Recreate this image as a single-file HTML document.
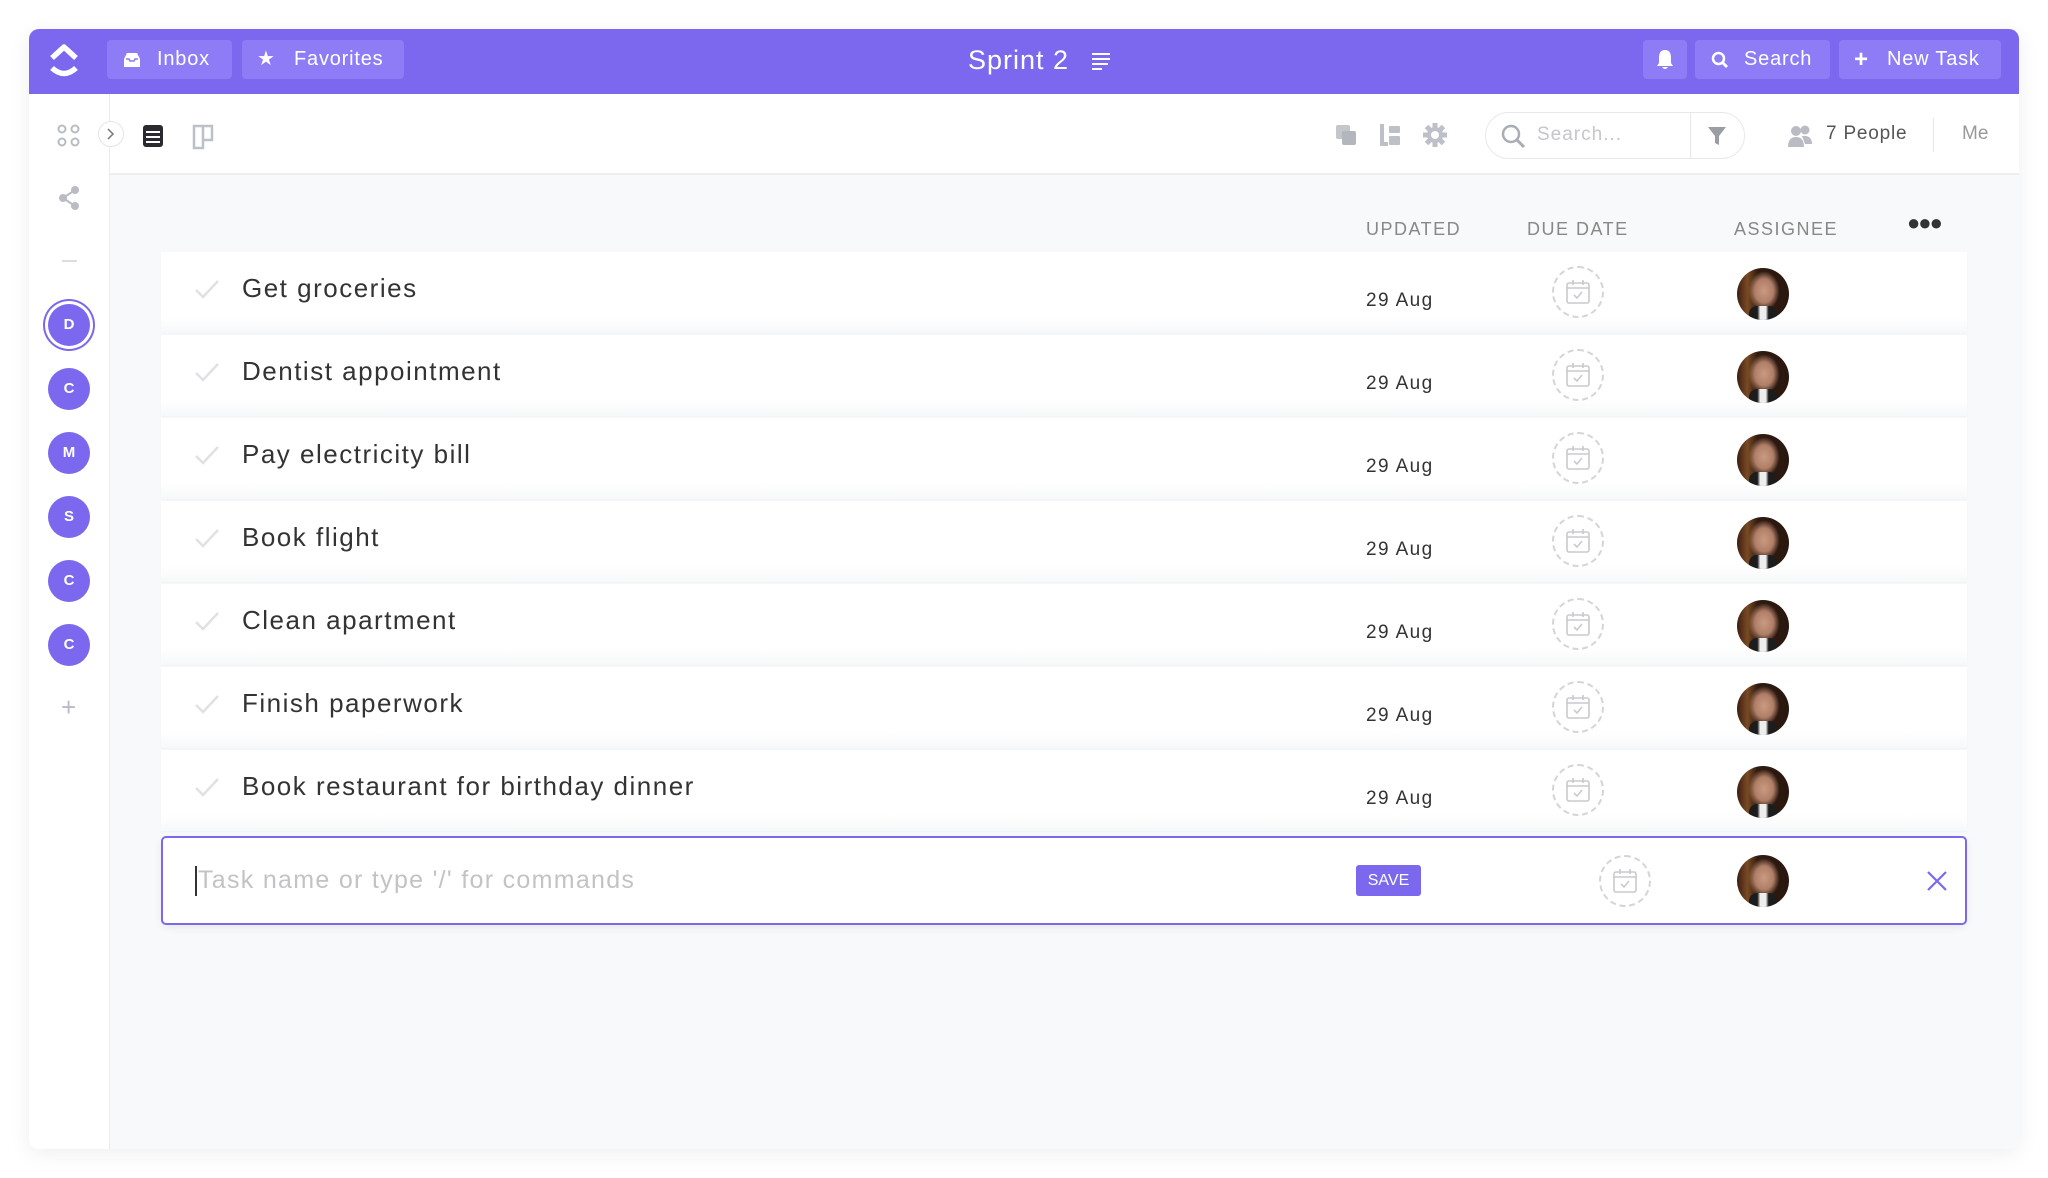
<!DOCTYPE html>
<html><head><meta charset="utf-8"><style>
*{box-sizing:border-box;margin:0;padding:0}
body{width:2048px;height:1178px;background:#fff;font-family:"Liberation Sans",sans-serif;position:relative;overflow:hidden}
.frame{position:absolute;left:29px;top:29px;width:1990px;height:1120px;border-radius:10px;background:#f8f9fa;box-shadow:0 4px 22px rgba(0,0,0,0.07);overflow:hidden}
.hdr{position:absolute;left:0;top:0;width:1990px;height:65px;background:#7b68ee}
.btn{position:absolute;top:11px;height:39px;background:#8d7cf6;border-radius:4px;color:#fff;font-size:20px;line-height:39px;letter-spacing:0.8px}
.side{position:absolute;left:0;top:65px;width:81px;height:1055px;background:#fff;border-right:1px solid #e9ebf0}
.tb{position:absolute;left:81px;top:65px;width:1909px;height:81px;background:#fff;border-bottom:2px solid #eceef2}
.av{position:absolute;left:19px;width:42px;height:42px;border-radius:50%;background:#7b68ee;color:#fff;font-size:15px;font-weight:bold;text-align:center;line-height:42px}
.row{position:absolute;left:132px;width:1806px;height:81px;background:linear-gradient(#fff 0,#fff 80%,#f7f8f9 100%);box-shadow:0 1px 2px rgba(0,0,0,0.03)}
.row .t{position:absolute;left:81px;top:21px;font-size:26px;color:#333;letter-spacing:1.5px}
.row .ck{position:absolute;left:33px;top:26px}
.row .d{position:absolute;left:1205px;top:38px;font-size:19px;color:#333;letter-spacing:1.4px}
.cal{position:absolute;width:52px;height:52px;border:2px dashed #d5d5d8;border-radius:50%}
.cal svg{position:absolute;left:12px;top:11px}
.pic{position:absolute;width:52px;height:52px;border-radius:50%;overflow:hidden;background:radial-gradient(ellipse 30% 38% at 52% 44%,#c99a82 0,#b07e66 60%,transparent 100%),linear-gradient(90deg,#3a1e12 0,#7a4a24 20%,#2e1a10 40%,#2a170f 100%)}
.pic:after{content:"";position:absolute;left:12px;top:38px;width:28px;height:20px;background:linear-gradient(90deg,#1c1c1c 30%,#eee 40%,#eee 60%,#1c1c1c 70%);border-radius:8px 8px 0 0}
.hd{position:absolute;top:190px;font-size:18px;color:#888;letter-spacing:1.5px}
</style></head><body>
<div class="frame">
 <div class="hdr">
  <svg style="position:absolute;left:18px;top:14px" width="34" height="36" viewBox="0 0 34 36"><path d="M5 15 L17 4 L29 15" stroke="#fff" stroke-width="5.5" fill="none" stroke-linejoin="round"/><path d="M5 25 Q17 36 29 25" stroke="#fff" stroke-width="5.5" fill="none"/></svg>
  <div class="btn" style="left:78px;width:125px"><svg style="position:absolute;left:15px;top:12px" width="20" height="16" viewBox="0 0 20 16"><path d="M2 7 L5 1 H15 L18 7 V15 H2 Z" fill="#fff"/><path d="M4 7 H7 L8 9 H12 L13 7 H16" stroke="#8d7cf6" stroke-width="1.6" fill="none"/></svg><span style="position:absolute;left:50px">Inbox</span></div>
  <div class="btn" style="left:213px;width:162px"><span style="position:absolute;left:15px;font-size:20px">★</span><span style="position:absolute;left:52px">Favorites</span></div>
  <div style="position:absolute;left:939px;top:13px;color:#fff;font-size:27px;line-height:36px;letter-spacing:1px">Sprint 2</div>
  <svg style="position:absolute;left:1061px;top:23px" width="22" height="18"><g stroke="#fff" stroke-width="2"><line x1="2" y1="2" x2="20" y2="2"/><line x1="2" y1="7" x2="20" y2="7"/><line x1="2" y1="12" x2="18" y2="12"/><line x1="2" y1="17" x2="12" y2="17"/></g></svg>
  <div class="btn" style="left:1614px;width:44px"><svg style="position:absolute;left:12px;top:9px" width="20" height="22" viewBox="0 0 20 22"><path d="M10 1 C5 1 4 5 4 9 V14 L2 17 H18 L16 14 V9 C16 5 15 1 10 1Z M7 18 Q10 22 13 18Z" fill="#fff"/></svg></div>
  <div class="btn" style="left:1666px;width:135px"><svg style="position:absolute;left:16px;top:11px" width="18" height="18"><circle cx="7.5" cy="7.5" r="5.5" stroke="#fff" stroke-width="2.5" fill="none"/><line x1="11.5" y1="11.5" x2="16" y2="16" stroke="#fff" stroke-width="2.8"/></svg><span style="position:absolute;left:49px">Search</span></div>
  <div class="btn" style="left:1810px;width:162px"><span style="position:absolute;left:15px;font-size:24px;font-weight:bold">+</span><span style="position:absolute;left:48px">New Task</span></div>
 </div>
 <div class="side">
  <svg style="position:absolute;left:28px;top:30px" width="24" height="24"><g fill="none" stroke="#b9bcc4" stroke-width="2"><circle cx="5" cy="5" r="3.5"/><circle cx="18" cy="5" r="3.5"/><circle cx="5" cy="18" r="3.5"/><circle cx="18" cy="18" r="3.5"/></g></svg>
  <svg style="position:absolute;left:29px;top:91px" width="22" height="26"><g fill="#b9bcc4"><circle cx="17" cy="5" r="4"/><circle cx="5" cy="13" r="4"/><circle cx="17" cy="21" r="4"/></g><path d="M17 5 L5 13 L17 21" stroke="#b9bcc4" stroke-width="2" fill="none"/></svg>
  <div style="position:absolute;left:33px;top:166px;width:15px;height:2px;background:#dcdee3"></div>
  <div class="av" style="top:210px;box-shadow:0 0 0 3px #fff,0 0 0 5px #7b68ee">D</div>
  <div class="av" style="top:274px">C</div>
  <div class="av" style="top:338px">M</div>
  <div class="av" style="top:402px">S</div>
  <div class="av" style="top:466px">C</div>
  <div class="av" style="top:530px">C</div>
  <div style="position:absolute;left:32px;top:598px;font-size:26px;color:#b9bcc4">+</div>
 </div>
 <div class="tb">
  <div style="position:absolute;left:-12px;top:27px;width:26px;height:26px;border-radius:50%;background:#fff;border:1px solid #e3e5ea"></div>
  <svg style="position:absolute;left:-4px;top:34px" width="10" height="12"><path d="M2 1 L7 6 L2 11" stroke="#777" stroke-width="1.5" fill="none"/></svg>
  <svg style="position:absolute;left:32px;top:30px" width="22" height="24"><rect x="1" y="1" width="20" height="22" rx="3" fill="#2b2b2f"/><g stroke="#fff" stroke-width="2"><line x1="4" y1="8" x2="18" y2="8"/><line x1="4" y1="13" x2="18" y2="13"/><line x1="4" y1="18" x2="18" y2="18"/></g></svg>
  <svg style="position:absolute;left:82px;top:30px" width="22" height="26"><path d="M2 2 H20 V16 H11 V24 H2 Z M11 2 V16" stroke="#bdc0c6" stroke-width="2.5" fill="none"/></svg>
  <svg style="position:absolute;left:1224px;top:29px" width="24" height="24"><rect x="2" y="2" width="14" height="14" rx="2" fill="#c4c6cb"/><rect x="8" y="8" width="14" height="14" rx="2" fill="#b3b6bc"/></svg>
  <svg style="position:absolute;left:1268px;top:29px" width="24" height="24"><rect x="2" y="1" width="4" height="22" fill="#bdc0c6"/><rect x="2" y="19" width="8" height="4" fill="#bdc0c6"/><rect x="11" y="3" width="11" height="7" rx="1" fill="#bdc0c6"/><rect x="11" y="13" width="11" height="9" rx="1" fill="#bdc0c6"/></svg>
  <svg style="position:absolute;left:1312px;top:28px" width="26" height="26" viewBox="0 0 26 26"><g fill="#bdc0c6"><circle cx="13" cy="13" r="8"/><g stroke="#bdc0c6" stroke-width="5"><line x1="13" y1="1" x2="13" y2="25"/><line x1="1" y1="13" x2="25" y2="13"/><line x1="4.5" y1="4.5" x2="21.5" y2="21.5"/><line x1="21.5" y1="4.5" x2="4.5" y2="21.5"/></g></g><circle cx="13" cy="13" r="4" fill="#fff"/></svg>
  <div style="position:absolute;left:1375px;top:18px;width:260px;height:47px;border:1.5px solid #e6e8ec;border-radius:24px"></div>
  <div style="position:absolute;left:1580px;top:19px;width:1px;height:45px;background:#e6e8ec"></div>
  <svg style="position:absolute;left:1390px;top:29px" width="26" height="26"><circle cx="11" cy="11" r="8" stroke="#a9adb5" stroke-width="2.5" fill="none"/><line x1="17" y1="17" x2="24" y2="24" stroke="#a9adb5" stroke-width="3"/></svg>
  <div style="position:absolute;left:1427px;top:30px;font-size:19px;color:#c4c6cb;letter-spacing:1px">Search...</div>
  <svg style="position:absolute;left:1597px;top:32px" width="20" height="20"><path d="M1 1 H19 L12 10 V19 L8 17 V10 Z" fill="#9a9da4"/></svg>
  <svg style="position:absolute;left:1677px;top:30px" width="26" height="24"><g fill="#b9bcc4"><circle cx="9" cy="7" r="5"/><circle cx="18" cy="6" r="4.5"/><path d="M1 23 Q1 13 9 13 Q17 13 17 23Z"/><path d="M15 12 Q25 11 25 20 H18Z"/></g></svg>
  <div style="position:absolute;left:1716px;top:29px;font-size:19px;color:#555;letter-spacing:0.8px">7 People</div>
  <div style="position:absolute;left:1823px;top:24px;width:1px;height:34px;background:#e6e8ec"></div>
  <div style="position:absolute;left:1852px;top:29px;font-size:19px;color:#999">Me</div>
 </div>
 <div class="hd" style="left:1337px">UPDATED</div>
 <div class="hd" style="left:1498px">DUE DATE</div>
 <div class="hd" style="left:1705px">ASSIGNEE</div>
 <div style="position:absolute;left:1878px;top:181px;font-size:22px;color:#333;letter-spacing:-2px">●●●</div>

 <div class="row" style="top:223px"><svg class="ck" width="26" height="22"><path d="M2 12 L9 19 L24 3" stroke="#dfe1e6" stroke-width="2.5" fill="none"/></svg><div class="t">Get groceries</div><div class="d">29 Aug</div><div class="cal" style="left:1391px;top:14px"><svg width="24" height="26"><rect x="1" y="4" width="22" height="20" rx="2" stroke="#c9cace" stroke-width="1.6" fill="none"/><line x1="1" y1="9" x2="23" y2="9" stroke="#c9cace" stroke-width="1.6"/><line x1="7" y1="1" x2="7" y2="6" stroke="#c9cace" stroke-width="1.6"/><line x1="17" y1="1" x2="17" y2="6" stroke="#c9cace" stroke-width="1.6"/><path d="M8 16 L11 19 L16 13" stroke="#c9cace" stroke-width="1.6" fill="none"/></svg></div><div class="pic" style="left:1576px;top:16px"></div></div>
 <div class="row" style="top:306px"><svg class="ck" width="26" height="22"><path d="M2 12 L9 19 L24 3" stroke="#dfe1e6" stroke-width="2.5" fill="none"/></svg><div class="t">Dentist appointment</div><div class="d">29 Aug</div><div class="cal" style="left:1391px;top:14px"><svg width="24" height="26"><rect x="1" y="4" width="22" height="20" rx="2" stroke="#c9cace" stroke-width="1.6" fill="none"/><line x1="1" y1="9" x2="23" y2="9" stroke="#c9cace" stroke-width="1.6"/><line x1="7" y1="1" x2="7" y2="6" stroke="#c9cace" stroke-width="1.6"/><line x1="17" y1="1" x2="17" y2="6" stroke="#c9cace" stroke-width="1.6"/><path d="M8 16 L11 19 L16 13" stroke="#c9cace" stroke-width="1.6" fill="none"/></svg></div><div class="pic" style="left:1576px;top:16px"></div></div>
 <div class="row" style="top:389px"><svg class="ck" width="26" height="22"><path d="M2 12 L9 19 L24 3" stroke="#dfe1e6" stroke-width="2.5" fill="none"/></svg><div class="t">Pay electricity bill</div><div class="d">29 Aug</div><div class="cal" style="left:1391px;top:14px"><svg width="24" height="26"><rect x="1" y="4" width="22" height="20" rx="2" stroke="#c9cace" stroke-width="1.6" fill="none"/><line x1="1" y1="9" x2="23" y2="9" stroke="#c9cace" stroke-width="1.6"/><line x1="7" y1="1" x2="7" y2="6" stroke="#c9cace" stroke-width="1.6"/><line x1="17" y1="1" x2="17" y2="6" stroke="#c9cace" stroke-width="1.6"/><path d="M8 16 L11 19 L16 13" stroke="#c9cace" stroke-width="1.6" fill="none"/></svg></div><div class="pic" style="left:1576px;top:16px"></div></div>
 <div class="row" style="top:472px"><svg class="ck" width="26" height="22"><path d="M2 12 L9 19 L24 3" stroke="#dfe1e6" stroke-width="2.5" fill="none"/></svg><div class="t">Book flight</div><div class="d">29 Aug</div><div class="cal" style="left:1391px;top:14px"><svg width="24" height="26"><rect x="1" y="4" width="22" height="20" rx="2" stroke="#c9cace" stroke-width="1.6" fill="none"/><line x1="1" y1="9" x2="23" y2="9" stroke="#c9cace" stroke-width="1.6"/><line x1="7" y1="1" x2="7" y2="6" stroke="#c9cace" stroke-width="1.6"/><line x1="17" y1="1" x2="17" y2="6" stroke="#c9cace" stroke-width="1.6"/><path d="M8 16 L11 19 L16 13" stroke="#c9cace" stroke-width="1.6" fill="none"/></svg></div><div class="pic" style="left:1576px;top:16px"></div></div>
 <div class="row" style="top:555px"><svg class="ck" width="26" height="22"><path d="M2 12 L9 19 L24 3" stroke="#dfe1e6" stroke-width="2.5" fill="none"/></svg><div class="t">Clean apartment</div><div class="d">29 Aug</div><div class="cal" style="left:1391px;top:14px"><svg width="24" height="26"><rect x="1" y="4" width="22" height="20" rx="2" stroke="#c9cace" stroke-width="1.6" fill="none"/><line x1="1" y1="9" x2="23" y2="9" stroke="#c9cace" stroke-width="1.6"/><line x1="7" y1="1" x2="7" y2="6" stroke="#c9cace" stroke-width="1.6"/><line x1="17" y1="1" x2="17" y2="6" stroke="#c9cace" stroke-width="1.6"/><path d="M8 16 L11 19 L16 13" stroke="#c9cace" stroke-width="1.6" fill="none"/></svg></div><div class="pic" style="left:1576px;top:16px"></div></div>
 <div class="row" style="top:638px"><svg class="ck" width="26" height="22"><path d="M2 12 L9 19 L24 3" stroke="#dfe1e6" stroke-width="2.5" fill="none"/></svg><div class="t">Finish paperwork</div><div class="d">29 Aug</div><div class="cal" style="left:1391px;top:14px"><svg width="24" height="26"><rect x="1" y="4" width="22" height="20" rx="2" stroke="#c9cace" stroke-width="1.6" fill="none"/><line x1="1" y1="9" x2="23" y2="9" stroke="#c9cace" stroke-width="1.6"/><line x1="7" y1="1" x2="7" y2="6" stroke="#c9cace" stroke-width="1.6"/><line x1="17" y1="1" x2="17" y2="6" stroke="#c9cace" stroke-width="1.6"/><path d="M8 16 L11 19 L16 13" stroke="#c9cace" stroke-width="1.6" fill="none"/></svg></div><div class="pic" style="left:1576px;top:16px"></div></div>
 <div class="row" style="top:721px"><svg class="ck" width="26" height="22"><path d="M2 12 L9 19 L24 3" stroke="#dfe1e6" stroke-width="2.5" fill="none"/></svg><div class="t">Book restaurant for birthday dinner</div><div class="d">29 Aug</div><div class="cal" style="left:1391px;top:14px"><svg width="24" height="26"><rect x="1" y="4" width="22" height="20" rx="2" stroke="#c9cace" stroke-width="1.6" fill="none"/><line x1="1" y1="9" x2="23" y2="9" stroke="#c9cace" stroke-width="1.6"/><line x1="7" y1="1" x2="7" y2="6" stroke="#c9cace" stroke-width="1.6"/><line x1="17" y1="1" x2="17" y2="6" stroke="#c9cace" stroke-width="1.6"/><path d="M8 16 L11 19 L16 13" stroke="#c9cace" stroke-width="1.6" fill="none"/></svg></div><div class="pic" style="left:1576px;top:16px"></div></div>

 <div style="position:absolute;left:132px;top:807px;width:1806px;height:89px;background:#fff;border:2px solid #7b68ee;border-radius:5px;box-shadow:0 3px 8px rgba(0,0,0,0.06)">
  <div style="position:absolute;left:32px;top:28px;width:2px;height:30px;background:#333"></div>
  <div style="position:absolute;left:35px;top:28px;font-size:25px;color:#c2c3c7;letter-spacing:1.3px">Task name or type '/' for commands</div>
  <div style="position:absolute;left:1193px;top:27px;width:65px;height:31px;background:#7b68ee;border-radius:3px;color:#fff;font-size:16px;line-height:31px;text-align:center">SAVE</div>
  <div class="cal" style="left:1436px;top:17px"><svg width="24" height="26"><rect x="1" y="4" width="22" height="20" rx="2" stroke="#c9cace" stroke-width="1.6" fill="none"/><line x1="1" y1="9" x2="23" y2="9" stroke="#c9cace" stroke-width="1.6"/><line x1="7" y1="1" x2="7" y2="6" stroke="#c9cace" stroke-width="1.6"/><line x1="17" y1="1" x2="17" y2="6" stroke="#c9cace" stroke-width="1.6"/><path d="M8 16 L11 19 L16 13" stroke="#c9cace" stroke-width="1.6" fill="none"/></svg></div>
  <div class="pic" style="left:1574px;top:17px"></div>
  <svg style="position:absolute;left:1763px;top:32px" width="22" height="22"><path d="M2 2 L20 20 M20 2 L2 20" stroke="#7b68ee" stroke-width="2.2"/></svg>
 </div>
</div>
</body></html>
